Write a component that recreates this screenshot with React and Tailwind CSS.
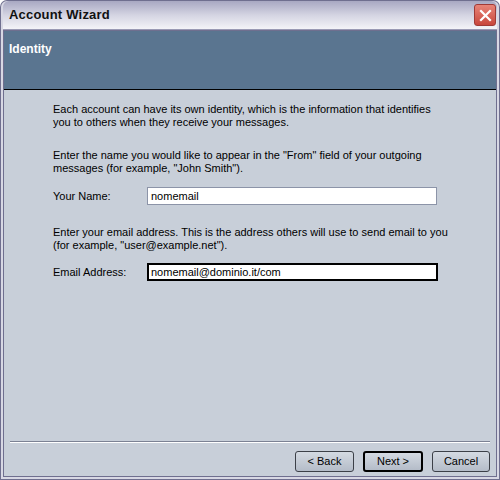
export default function App() {
  const font = { fontFamily: '"Liberation Sans", Arial, sans-serif' };
  return (
    <div className="w-[500px] h-[480px] bg-[#6f6f8f] p-[1px] rounded-t-[7px] overflow-hidden" style={font}>
      <div className="w-full h-full flex flex-col rounded-t-[6px] bg-[#d8d8e4] p-[2px] pt-0 overflow-hidden">
        {/* title bar */}
        <div className="h-[29px] flex items-center justify-between pl-[6px] pr-[1px] rounded-t-[6px] bg-gradient-to-b from-[#a8a8c2] via-[#d4d4e2] to-[#f4f4f8] border-b border-[#9a9ab4]">
          <span className="text-[13px] font-bold text-[#111] tracking-[0.2px]">Account Wizard</span>
          <div className="w-[22px] h-[22px] rounded-[3px] bg-gradient-to-b from-[#e88478] to-[#c8463c] border border-[#a03a36] flex items-center justify-center">
            <svg width="13" height="13" viewBox="0 0 13 13">
              <path d="M2 2 L11 11 M11 2 L2 11" stroke="white" strokeWidth="2.2" strokeLinecap="square" />
            </svg>
          </div>
        </div>
        <div className="flex-1 flex flex-col border border-[#6f6f8f] bg-[#c8cfd9]">
          {/* header */}
          <div className="h-[59px] bg-[#5a7590] border-b border-black px-[5px] pt-[5px]">
            <span className="text-[12px] font-bold text-white">Identity</span>
          </div>
          {/* body */}
          <div className="flex-1 pl-[49px] pr-[10px] pt-[13px] text-[11px] leading-[13px] text-black">
            <p>Each account can have its own identity, which is the information that identifies<br />you to others when they receive your messages.</p>
            <p className="mt-[20px]">Enter the name you would like to appear in the "From" field of your outgoing<br />messages (for example, "John Smith").</p>
            <div className="mt-[12px] flex items-center">
              <span className="w-[94px]">Your Name:</span>
              <div className="w-[290px] h-[18px] bg-white border border-[#8c94a8] px-[3px] flex items-center">nomemail</div>
            </div>
            <p className="mt-[21px]">Enter your email address. This is the address others will use to send email to you<br />(for example, "user@example.net").</p>
            <div className="mt-[11px] flex items-center">
              <span className="w-[94px]">Email Address:</span>
              <div className="w-[291px] h-[18px] bg-white border-[2px] border-black px-[2px] flex items-center">nomemail@dominio.it/com</div>
            </div>
          </div>
          {/* footer */}
          <div className="px-[6px]">
            <div className="border-t border-[#7c8294] border-b border-b-white h-[2px]" />
          </div>
          <div className="h-[33px] flex justify-end items-center gap-[9px] pr-[6px] pt-[3px] text-[11px]">
            <button className="w-[59px] h-[21px] rounded-[3px] border border-[#3c4048] bg-gradient-to-b from-[#d4dae2] to-[#b4bcc8]">&lt; Back</button>
            <button className="w-[60px] h-[21px] rounded-[3px] border-[2px] border-black bg-gradient-to-b from-[#d4dae2] to-[#b4bcc8]">Next &gt;</button>
            <button className="w-[58px] h-[21px] rounded-[3px] border border-[#3c4048] bg-gradient-to-b from-[#d4dae2] to-[#b4bcc8]">Cancel</button>
          </div>
        </div>
      </div>
    </div>
  );
}
